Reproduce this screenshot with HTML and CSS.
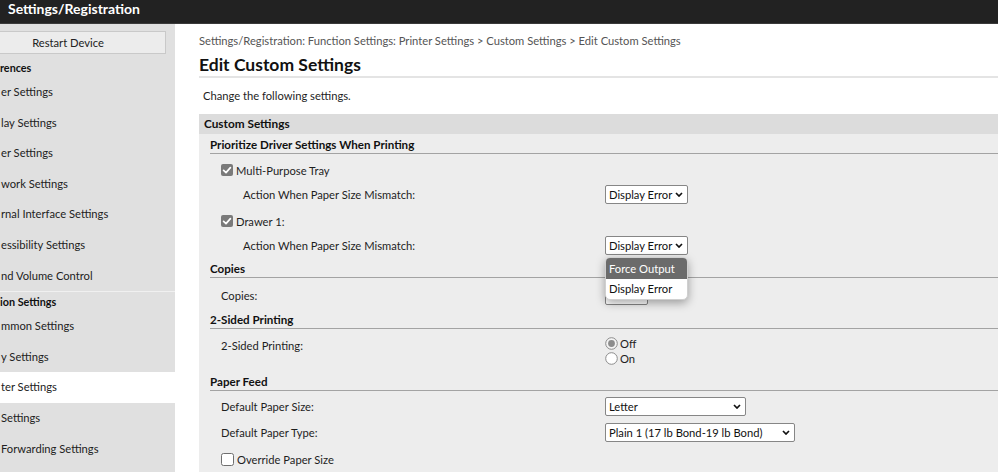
FILE: index.html
```html
<!DOCTYPE html>
<html lang="en">
<head>
<meta charset="utf-8">
<title>Edit Custom Settings</title>
<link rel="stylesheet" href="styles.css">
</head>
<body>
<header class="topbar"><h1 class="title">Settings/Registration</h1></header>
<div class="main">
  <nav class="sidebar">
    <button class="restart" type="button">Restart Device</button>
    <div class="nav-group">
      <div class="nav-head">rences</div>
      <a class="nav-item">er Settings</a>
      <a class="nav-item">lay Settings</a>
      <a class="nav-item">er Settings</a>
      <a class="nav-item">work Settings</a>
      <a class="nav-item">rnal Interface Settings</a>
      <a class="nav-item">essibility Settings</a>
      <a class="nav-item">nd Volume Control</a>
    </div>
    <div class="nav-group sep">
      <div class="nav-head">ion Settings</div>
      <a class="nav-item">mmon Settings</a>
      <a class="nav-item">y Settings</a>
      <a class="nav-item selected">ter Settings</a>
      <a class="nav-item">Settings</a>
      <a class="nav-item">Forwarding Settings</a>
    </div>
  </nav>

  <main class="content">
    <div class="crumb">Settings/Registration: Function Settings: Printer Settings &gt; Custom Settings &gt; Edit Custom Settings</div>
    <h2 class="page-title">Edit Custom Settings</h2>
    <p class="intro">Change the following settings.</p>

    <section class="panel">
      <div class="panel-head">Custom Settings</div>
      <div class="panel-body">

        <div class="sub">
          <div class="sub-head">Prioritize Driver Settings When Printing</div>
          <div class="rows">
            <div class="row check-row">
              <svg class="cb" viewBox="0 0 12 12" width="12" height="12"><rect x="0" y="0" width="12" height="12" rx="2" fill="#7a7a7a"/><path d="M2.6 6.3 L5 8.6 L9.4 3.6" fill="none" stroke="#fff" stroke-width="1.7" stroke-linecap="round" stroke-linejoin="round"/></svg>
              <span>Multi-Purpose Tray</span>
            </div>
            <div class="row">
              <span class="flabel deep">Action When Paper Size Mismatch:</span>
              <span class="select w83">Display Error<svg class="chev" viewBox="0 0 8 5" width="8" height="5"><path d="M1 1 L4 4 L7 1" fill="none" stroke="#111" stroke-width="1.7"/></svg></span>
            </div>
            <div class="row check-row gap">
              <svg class="cb" viewBox="0 0 12 12" width="12" height="12"><rect x="0" y="0" width="12" height="12" rx="2" fill="#7a7a7a"/><path d="M2.6 6.3 L5 8.6 L9.4 3.6" fill="none" stroke="#fff" stroke-width="1.7" stroke-linecap="round" stroke-linejoin="round"/></svg>
              <span>Drawer 1:</span>
            </div>
            <div class="row">
              <span class="flabel deep">Action When Paper Size Mismatch:</span>
              <span class="select w83">Display Error<svg class="chev" viewBox="0 0 8 5" width="8" height="5"><path d="M1 1 L4 4 L7 1" fill="none" stroke="#111" stroke-width="1.7"/></svg>
                <span class="popup">
                  <span class="opt active">Force Output</span>
                  <span class="opt">Display Error</span>
                </span>
              </span>
            </div>
          </div>
        </div>

        <div class="sub">
          <div class="sub-head">Copies</div>
          <div class="rows">
            <div class="row input-row">
              <span class="flabel">Copies:</span>
              <span class="textbox">1</span>
            </div>
          </div>
        </div>

        <div class="sub">
          <div class="sub-head">2-Sided Printing</div>
          <div class="rows">
            <div class="row radio-row">
              <span class="flabel">2-Sided Printing:</span>
              <span class="radios">
                <span class="radio"><svg viewBox="0 0 13 13" width="13" height="13"><circle cx="6.5" cy="6.5" r="5.8" fill="#f4f4f4" stroke="#8c8c8c" stroke-width="1"/><circle cx="6.5" cy="6.5" r="3.4" fill="#8c8c8c"/></svg>Off</span>
                <span class="radio"><svg viewBox="0 0 13 13" width="13" height="13"><circle cx="6.5" cy="6.5" r="5.8" fill="#fff" stroke="#8c8c8c" stroke-width="1"/></svg>On</span>
              </span>
            </div>
          </div>
        </div>

        <div class="sub">
          <div class="sub-head">Paper Feed</div>
          <div class="rows feed">
            <div class="row tall">
              <span class="flabel">Default Paper Size:</span>
              <span class="select w141">Letter<svg class="chev" viewBox="0 0 8 5" width="8" height="5"><path d="M1 1 L4 4 L7 1" fill="none" stroke="#111" stroke-width="1.7"/></svg></span>
            </div>
            <div class="row tall">
              <span class="flabel">Default Paper Type:</span>
              <span class="select w190">Plain 1 (17 lb Bond-19 lb Bond)<svg class="chev" viewBox="0 0 8 5" width="8" height="5"><path d="M1 1 L4 4 L7 1" fill="none" stroke="#111" stroke-width="1.7"/></svg></span>
            </div>
            <div class="row tall check-row">
              <svg class="cb" viewBox="0 0 13 13" width="13" height="13"><rect x="0.5" y="0.5" width="12" height="12" rx="2" fill="#fff" stroke="#6f6f6f" stroke-width="1"/></svg>
              <span>Override Paper Size</span>
            </div>
          </div>
        </div>

      </div>
    </section>
  </main>
</div>
</body>
</html>
```

FILE: styles.css
```css
* { box-sizing: border-box; }

body {
  margin: 0;
  height: 472px;
  overflow: hidden;
  background: #fff;
  font-family: Lato, "Open Sans", sans-serif;
  font-size: 11.2px;
  color: #1e1e1e;
}

.topbar {
  height: 24px;
  background: #222;
  border-bottom: 1px solid #3a3a3a;
  padding-left: 8px;
}

.title {
  margin: 0;
  font-size: 14px;
  font-weight: 700;
  line-height: 17px;
  color: #fff;
}

.main {
  display: flex;
  height: 448px;
}

/* Sidebar */
.sidebar {
  width: 175px;
  flex: none;
  background: #e0e0e0;
  overflow: hidden;
}

.restart {
  display: block;
  width: 196px;
  height: 23px;
  margin: 7px 0 0 -30px;
  padding: 0;
  border: 1px solid #c9c9c9;
  background: #ececec;
  font: inherit;
  font-size: 11.2px;
  color: #222;
}

.nav-group { margin-top: 4px; }
.nav-group.sep {
  margin-top: 0;
  border-top: 1px solid #f0f0f0;
}

.nav-head {
  height: 19px;
  line-height: 19px;
  font-size: 10.8px;
  font-weight: 700;
  color: #111;
}

.nav-item {
  display: block;
  height: 30.6px;
  line-height: 30.6px;
  padding-left: 1px;
  color: #222;
  white-space: nowrap;
}

.nav-item.selected { background: #fff; }

/* Content */
.content {
  flex: 1;
  min-width: 0;
  padding-left: 24px;
  overflow: hidden;
}

.crumb {
  padding-top: 9px;
  line-height: 16px;
  color: #555;
  white-space: nowrap;
}

.page-title {
  margin: 5px 0 0;
  font-size: 17.5px;
  font-weight: 700;
  line-height: 22px;
  color: #111;
  border-bottom: 2px solid #e4e4e4;
}

.intro {
  margin: 10px 0 0;
  padding-left: 4px;
  line-height: 16px;
}

.panel { margin-top: 10px; }

.panel-head {
  height: 20px;
  line-height: 20px;
  padding-left: 5px;
  background: #dcdcdc;
  font-size: 11.8px;
  font-weight: 700;
  color: #111;
}

.panel-body {
  background: #ededed;
  padding-left: 11px;
  height: 340px;
}

.sub-head {
  padding-top: 3px;
  line-height: 16px;
  font-size: 11.6px;
  font-weight: 700;
  color: #111;
  border-bottom: 1px solid #a3a3a3;
}

.rows { padding: 4px 0 1px; }
.rows.feed { padding-top: 2px; }

.row {
  display: flex;
  align-items: center;
  height: 24px;
}

.row.gap { margin-top: 3px; }
.row.input-row { height: 26px; }
.row.tall { height: 26.5px; }

.check-row { padding-left: 11px; }
.cb { flex: none; margin-right: 3px; }

.flabel {
  flex: none;
  width: 395px;
  padding-left: 11px;
}
.flabel.deep { padding-left: 33px; }

/* Select look-alike */
.select {
  position: relative;
  display: inline-flex;
  align-items: center;
  justify-content: space-between;
  height: 19px;
  padding: 0 4px 0 3px;
  border: 1px solid #868686;
  border-radius: 2px;
  background: #fff;
  color: #111;
  white-space: nowrap;
}
.w83 { width: 83px; }
.w141 { width: 141px; }
.w190 { width: 190px; }
.chev { flex: none; }

.popup {
  position: absolute;
  left: -1px;
  top: calc(100% + 3px);
  z-index: 5;
  width: 83px;
  display: flex;
  flex-direction: column;
  background: #fff;
  border: 1px solid #d0d0d0;
  border-radius: 5px;
  box-shadow: 0 3px 10px rgba(0, 0, 0, 0.35);
  overflow: hidden;
}

.opt {
  height: 20px;
  line-height: 20px;
  padding-left: 3px;
  color: #111;
}
.opt.active {
  height: 21px;
  line-height: 21px;
  background: #6b6b6b;
  color: #fff;
}

.textbox {
  display: inline-block;
  width: 43px;
  height: 19px;
  padding-left: 4px;
  line-height: 17px;
  border: 1px solid #868686;
  border-radius: 2px;
  background: #fff;
}

/* Radios */
.row.radio-row {
  height: 37px;
  align-items: flex-start;
}
.radio-row .flabel {
  padding-top: 5px;
  line-height: 16px;
}
.radios {
  display: flex;
  flex-direction: column;
  padding-top: 3px;
}
.radio {
  display: flex;
  align-items: center;
  height: 15px;
  gap: 2px;
}
```
